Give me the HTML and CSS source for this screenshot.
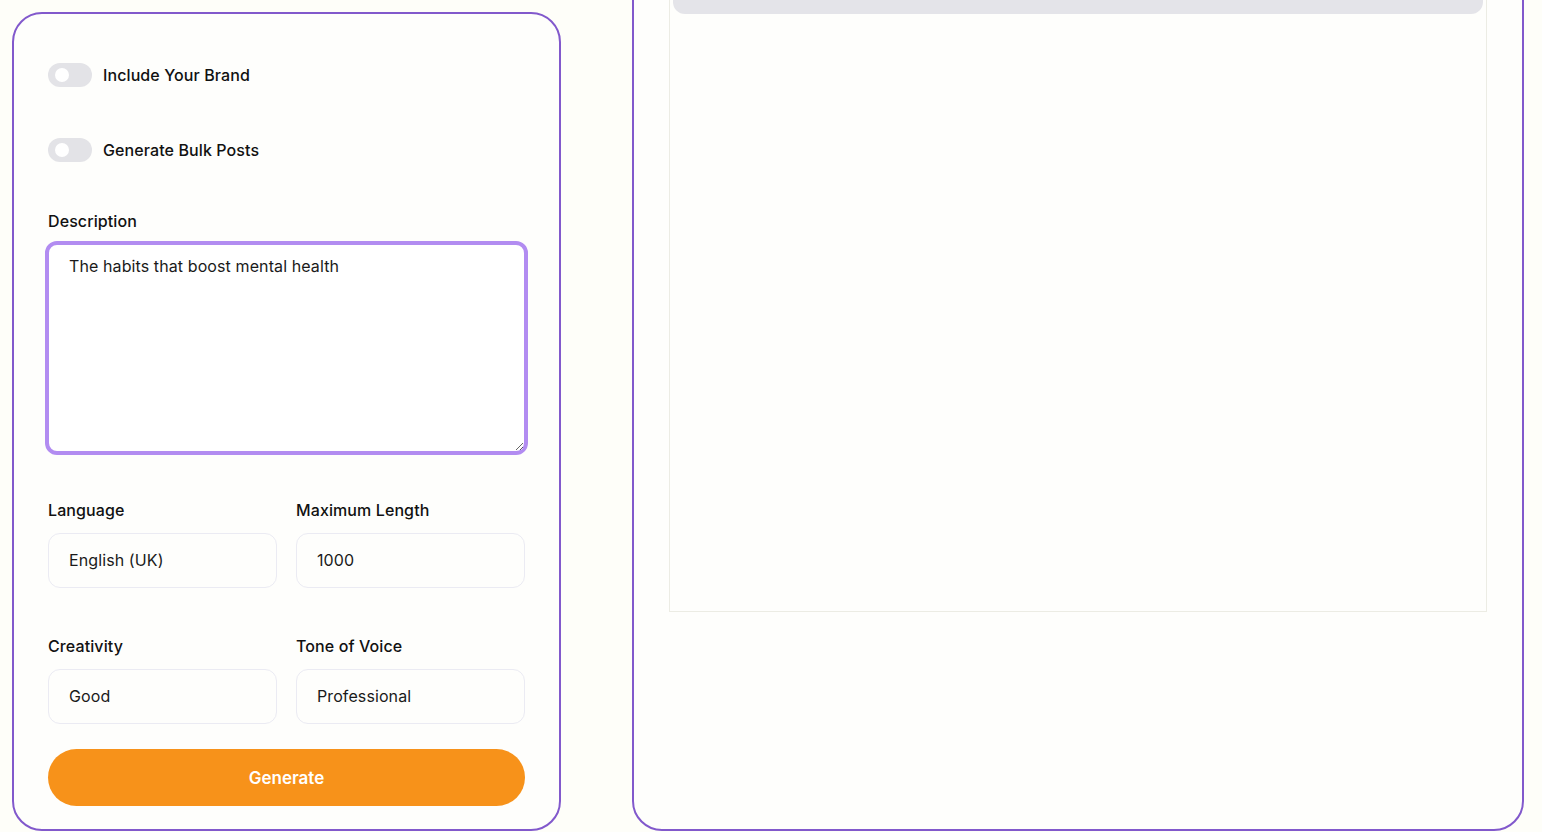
FILE: index.html
```html
<!DOCTYPE html>
<html lang="en">
<head>
  <meta charset="UTF-8">
  <meta name="viewport" content="width=device-width, initial-scale=1.0">
  <title>Post Generator</title>
  <link rel="stylesheet" href="styles.css">
</head>
<body>
  <div class="layout">
    <form class="panel form-panel" onsubmit="return false">
      <label class="switch-row">
        <span class="switch"><span class="knob"></span></span>
        <span class="switch-label">Include Your Brand</span>
      </label>

      <label class="switch-row second">
        <span class="switch"><span class="knob"></span></span>
        <span class="switch-label">Generate Bulk Posts</span>
      </label>

      <label class="field-label desc-label" for="description">Description</label>
      <textarea id="description" class="description">The habits that boost mental health</textarea>

      <div class="grid">
        <div class="field">
          <label class="field-label" for="language">Language</label>
          <input id="language" class="text-input" type="text" value="English (UK)">
        </div>
        <div class="field">
          <label class="field-label" for="maxLength">Maximum Length</label>
          <input id="maxLength" class="text-input" type="text" value="1000">
        </div>
        <div class="field">
          <label class="field-label" for="creativity">Creativity</label>
          <input id="creativity" class="text-input" type="text" value="Good">
        </div>
        <div class="field">
          <label class="field-label" for="tone">Tone of Voice</label>
          <input id="tone" class="text-input" type="text" value="Professional">
        </div>
      </div>

      <button class="generate" type="submit">Generate</button>
    </form>

    <div class="panel output-panel">
      <div class="output-box">
        <div class="skeleton"></div>
      </div>
    </div>
  </div>
</body>
</html>
```

FILE: styles.css
```css
* {
  box-sizing: border-box;
}
body {
  margin: 0;
  padding: 12px 18px 0 12px;
  background: #fefef9;
  font-family: Inter, "Noto Sans", sans-serif;
  color: #111;
  letter-spacing: 0.1px;
  overflow: hidden;
}
.layout {
  display: flex;
  gap: 71px;
  align-items: stretch;
}
.panel {
  border: 2px solid #8259cc;
  border-radius: 30px;
  background: #fefefc;
}
.form-panel {
  width: 549px;
  flex: none;
  display: flex;
  flex-direction: column;
  padding: 49px 34px 23px;
}
.switch-row {
  display: flex;
  align-items: center;
  gap: 11px;
  height: 24px;
  font-size: 16px;
  font-weight: 500;
}
.switch-row.second {
  margin-top: 51px;
}
.switch {
  width: 44px;
  height: 24px;
  border-radius: 12px;
  background: #e3e3e7;
  display: flex;
  align-items: center;
  padding-left: 7px;
}
.knob {
  width: 14px;
  height: 14px;
  border-radius: 50%;
  background: #fff;
}
.field-label {
  display: block;
  font-size: 16px;
  font-weight: 500;
  line-height: 20px;
  margin-bottom: 13px;
}
.desc-label {
  margin-top: 49px;
  margin-bottom: 10px;
}
.description {
  margin: 0 -3px;
  height: 214px;
  border: 4px solid #b28cf1;
  border-radius: 12px;
  padding: 10px 20px;
  font-family: inherit;
  font-size: 16px;
  line-height: 22px;
  letter-spacing: 0.1px;
  color: #1a1a1a;
  background: #fff;
  outline: none;
}
.grid {
  display: grid;
  grid-template-columns: 1fr 1fr;
  column-gap: 19px;
  row-gap: 48px;
  margin-top: 45px;
}
.text-input {
  width: 100%;
  height: 55px;
  border: 1px solid #ebebf3;
  border-radius: 12px;
  padding: 0 20px 1px;
  font-family: inherit;
  font-size: 16px;
  letter-spacing: 0.1px;
  color: #1a1a1a;
  background: transparent;
  outline: none;
}
.generate {
  margin-top: 25px;
  height: 57px;
  border: none;
  border-radius: 29px;
  background: #f7921a;
  color: #fff;
  font-family: inherit;
  font-size: 17px;
  font-weight: 600;
  cursor: pointer;
}
.output-panel {
  flex: 1;
  margin-top: -80px;
  padding: 34px 35px;
}
.output-box {
  min-height: 644px;
  border: 1px solid #ecece4;
  padding: 3px;
}
.skeleton {
  height: 42px;
  background: #e4e4e9;
  border-radius: 12px;
}
```
